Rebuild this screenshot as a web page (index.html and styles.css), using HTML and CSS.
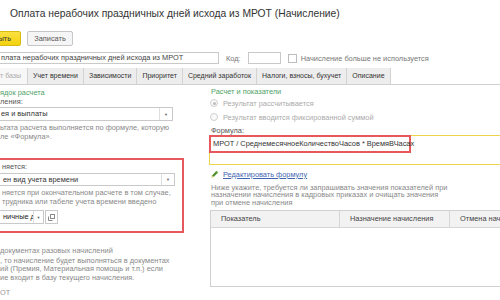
FILE: index.html
```html
<!DOCTYPE html>
<html lang="ru">
<head>
<meta charset="utf-8">
<title>Оплата нерабочих праздничных дней</title>
<link rel="stylesheet" href="styles.css">
</head>
<body>
<div class="page">
  <h1 class="title">Оплата нерабочих праздничных дней исхода из МРОТ (Начисление)</h1>

  <div class="toolbar">
    <button class="btn btn-primary">ыть</button>
    <button class="btn btn-save">Записать</button>
  </div>

  <div class="name-row">
    <div class="field name-field">плата нерабочих праздничных дней исхода из МРОТ</div>
    <span class="code-label">Код:</span>
    <div class="field code-field"></div>
    <span class="check"></span>
    <span class="check-label">Начисление больше не используется</span>
  </div>

  <div class="tabs">
    <div class="tab tab-dim">т базы</div>
    <div class="tab">Учет времени</div>
    <div class="tab">Зависимости</div>
    <div class="tab">Приоритет</div>
    <div class="tab">Средний заработок</div>
    <div class="tab">Налоги, взносы, бухучет</div>
    <div class="tab">Описание</div>
  </div>

  <div class="columns">
    <div class="col-left">
      <div class="group-title">ядок расчета</div>
      <div class="lbl">ления:</div>
      <div class="select">
        <span class="select-text">ея и выплаты</span>
        <span class="select-arrow">▼</span>
      </div>
      <div class="hint">
        <div>ьтата расчета выполняется по формуле, которую</div>
        <div>ле «Формула».</div>
      </div>

      <div class="highlight">
        <div class="lbl">няется:</div>
        <div class="select select-tight">
          <span class="select-text">ен вид учета времени</span>
          <span class="select-arrow">▼</span>
        </div>
        <div class="hint hint-tight">
          <div>няется при окончательном расчете в том случае,</div>
          <div>трудника или табеле учета времени введено</div>
        </div>
        <div class="mini-row">
          <div class="select mini-select">
            <span class="select-text mini-text">ничные д</span>
            <span class="select-arrow mini-arrow">▼</span>
          </div>
          <span class="open-btn">
            <svg width="7" height="7" viewBox="0 0 7 7"><rect x="2.5" y="0.5" width="4" height="4" fill="none" stroke="#8a8a8a"/><path d="M0.5 2.5 V6.5 H4.5" fill="none" stroke="#8a8a8a"/></svg>
          </span>
        </div>
      </div>

      <div class="lbl-light">документах разовых начислений</div>
      <div class="hint hint-bottom">
        <div>, то начисление будет выполняться в документах</div>
        <div>ий (Премия, Материальная помощь и т.п.) если</div>
        <div>ие входит в базу текущего начисления.</div>
      </div>
      <div class="lbl-faint">ОТ</div>
    </div>

    <div class="col-right">
      <div class="group-title group-title-r">Расчет и показатели</div>
      <div class="radio-row">
        <span class="radio radio-on"></span>
        <span class="radio-label">Результат рассчитывается</span>
      </div>
      <div class="radio-row">
        <span class="radio"></span>
        <span class="radio-label">Результат вводится фиксированной суммой</span>
      </div>
      <div class="lbl formula-label">Формула:</div>
      <div class="formula">
        <div class="formula-mark">МРОТ / СреднемесячноеКоличествоЧасов * ВремяВЧасах</div>
      </div>
      <div class="edit-link">
        <svg class="pencil" width="8" height="8" viewBox="0 0 8 8"><path d="M0.6 7.4 L1.2 5.2 L5.6 0.8 L7.2 2.4 L2.8 6.8 Z" fill="#4f8f2f"/><path d="M0.6 7.4 L1.2 5.2 L2.8 6.8 Z" fill="#e9cf6a"/><path d="M5 1.4 L6.6 3" stroke="#9cc46a" stroke-width="0.8"/></svg>
        <span class="link">Редактировать формулу</span>
      </div>
      <div class="hint hint-r">
        <div>Ниже укажите, требуется ли запрашивать значения показателей при</div>
        <div>назначении начисления в кадровых приказах и очищать значения</div>
        <div>при отмене начисления</div>
      </div>
      <div class="table">
        <div class="thead">
          <div class="th">Показатель</div>
          <div class="th">Назначение начисления</div>
          <div class="th">Отмена начисления</div>
        </div>
      </div>
    </div>
  </div>
</div>
</body>
</html>
```

FILE: styles.css
```css
* { box-sizing: border-box; }
html, body { margin: 0; padding: 0; }
body {
  width: 500px;
  height: 300px;
  overflow: hidden;
  background: #fff;
  font-family: "Liberation Sans", Arial, sans-serif;
  font-size: 7.4px;
  color: #444;
}
.page { width: 500px; height: 300px; overflow: hidden; }

.title {
  margin: 0;
  height: 31px;
  padding: 8px 0 0 10px;
  font-size: 10.3px;
  font-weight: normal;
  line-height: 12px;
  color: #333;
  white-space: nowrap;
}

.toolbar { display: flex; gap: 6px; height: 15px; margin-bottom: 6px; }
.btn {
  height: 15px;
  border: 1px solid #c6c6c6;
  border-radius: 2px;
  background: #f5f5f5;
  font: inherit;
  color: #555;
  line-height: 13px;
  padding: 0;
}
.btn-primary {
  margin-left: -3px;
  width: 24px;
  text-align: right;
  padding-right: 9px;
  background: linear-gradient(#fbe042, #f3d20e);
  border-color: #d9ba10;
  color: #333;
}
.btn-save { width: 46px; text-align: center; }

.name-row { display: flex; align-items: center; height: 12px; margin-bottom: 4px; }
.field {
  height: 12px;
  border: 1px solid #c9c9c9;
  background: #fff;
  line-height: 10px;
  color: #444;
  white-space: nowrap;
  overflow: hidden;
}
.name-field { width: 223px; margin-left: -4px; padding-left: 4px; }
.code-label { margin-left: 7px; color: #777; }
.code-field { width: 33px; margin-left: 7px; }
.check { width: 9px; height: 9px; border: 1px solid #bdbdbd; margin-left: 7px; background: #fff; }
.check-label { margin-left: 4px; color: #777; white-space: nowrap; }

.tabs { display: flex; height: 17px; border-bottom: 1px solid #d0d0d0; }
.tab {
  height: 16px;
  line-height: 16px;
  padding: 0 5px;
  background: #ededed;
  border-right: 1px solid #d3d3d3;
  color: #333;
  font-size: 7px;
  white-space: nowrap;
}
.tab-dim { background: #f7f7f7; color: #aaa; padding-left: 0; width: 28px; }

.columns { display: flex; gap: 25px; }
.col-left { width: 184px; flex: none; }
.col-right { width: 320px; flex: none; }

.group-title { color: #4fa267; line-height: 9px; margin-top: 3px; white-space: nowrap; }
.group-title-r { margin-top: 2px; padding-left: 2px; }
.lbl { line-height: 9px; color: #555; white-space: nowrap; }

.select {
  display: flex;
  height: 14px;
  width: 177px;
  margin-left: -4px;
  margin-top: 1px;
  border: 1px solid #c9c9c9;
  background: #fff;
}
.select-tight { height: 13px; margin-top: 2px; }
.select-text {
  flex: 1;
  padding-left: 4px;
  line-height: 12px;
  color: #333;
  white-space: nowrap;
  overflow: hidden;
}
.select-arrow {
  width: 13px;
  border-left: 1px solid #dedede;
  display: flex;
  align-items: center;
  justify-content: center;
  font-size: 4px;
  color: #666;
}

.hint { color: #888; line-height: 8.5px; margin-top: 3px; white-space: nowrap; }
.hint-tight { margin-top: 3px; }

.highlight {
  margin: 17px 0 0 -12px;
  padding: 2px 10px 7px 12px;
  border: 2px solid #e6585c;
}

.mini-row { display: flex; margin-top: 4px; height: 14px; }
.mini-select { width: 46px; margin-top: 0; height: 14px; }
.mini-text { color: #222; }
.mini-arrow { width: 10px; }
.open-btn {
  width: 13px;
  height: 14px;
  margin-left: 1px;
  border: 1px solid #c9c9c9;
  display: flex;
  align-items: center;
  justify-content: center;
  background: #fff;
}

.lbl-light { margin-top: 12.5px; line-height: 9px; color: #8a8a8a; white-space: nowrap; }
.hint-bottom { margin-top: 2px; }
.lbl-faint { margin-top: 5.5px; line-height: 9px; color: #999; }

.radio-row { display: flex; align-items: center; height: 14px; padding-left: 1px; }
.radio {
  width: 8px;
  height: 8px;
  border-radius: 50%;
  border: 1px solid #cfcfcf;
  background: #fafafa;
  display: flex;
  align-items: center;
  justify-content: center;
}
.radio-on::after {
  content: "";
  width: 3px;
  height: 3px;
  border-radius: 50%;
  background: #bbb;
}
.radio-label { margin-left: 5px; color: #aaa; white-space: nowrap; }

.formula-label { margin-top: 2px; padding-left: 2px; }
.formula {
  height: 30px;
  width: 320px;
  border: 1px solid #ecd54c;
  background: #fff;
}
.formula-mark {
  width: 202px;
  height: 18px;
  margin: -1px 0 0 -1px;
  border: 2px solid #e6585c;
  padding-left: 2px;
  line-height: 14px;
  color: #333;
  white-space: nowrap;
}

.edit-link { display: flex; align-items: center; height: 9px; margin-top: 4.5px; padding-left: 2px; }
.pencil { flex: none; }
.link { margin-left: 4px; color: #3f66b0; text-decoration: underline; line-height: 9px; white-space: nowrap; }

.hint-r { margin-top: 5px; line-height: 7.8px; padding-left: 2px; }

.table {
  margin: 3px 0 0 1px;
  width: 320px;
  height: 77px;
  border: 1px solid #d0d0d0;
  background: #fff;
}
.thead {
  display: grid;
  grid-template-columns: 129px 110px 1fr;
  height: 17px;
  background: #f2f2f2;
  border-bottom: 1px solid #d6d6d6;
}
.th {
  padding-left: 10px;
  line-height: 16px;
  color: #444;
  border-right: 1px solid #d6d6d6;
  white-space: nowrap;
}
```
